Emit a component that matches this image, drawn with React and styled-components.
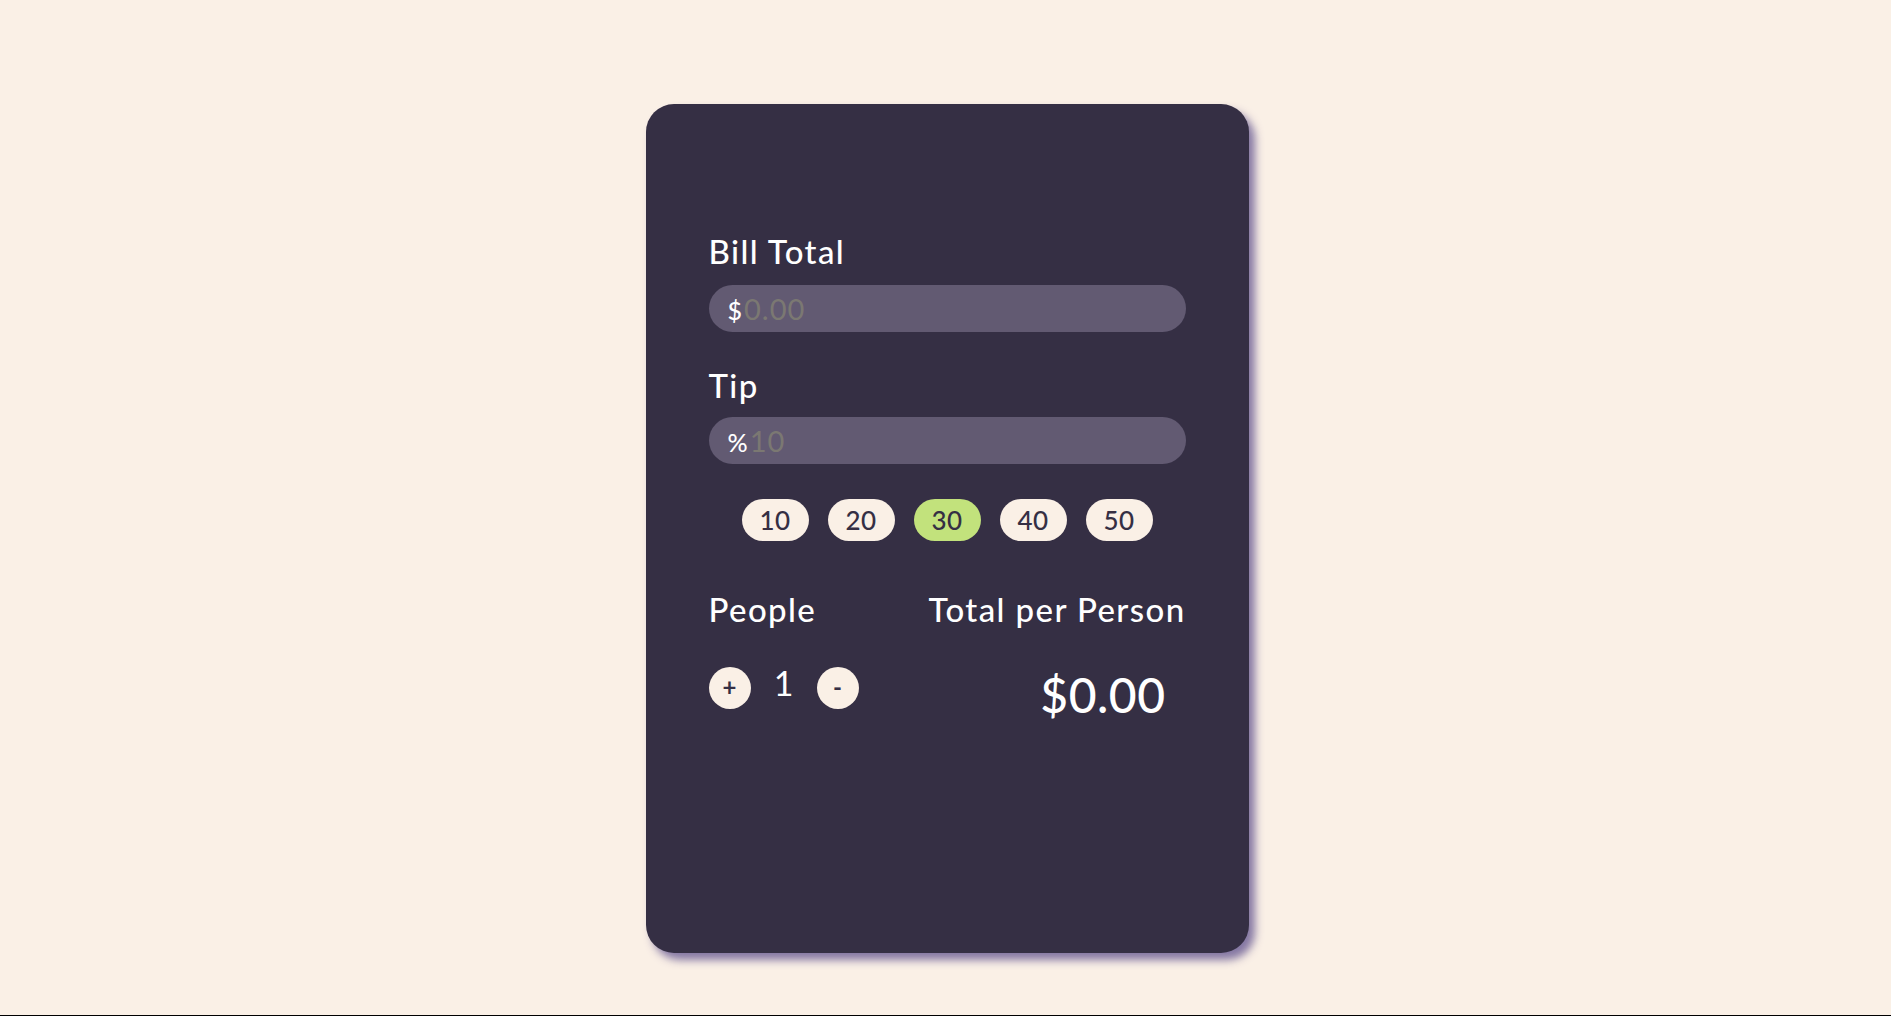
import React from "react";
import styled, { createGlobalStyle } from "styled-components";

const Global = createGlobalStyle`
  html { background: #000; }
  body {
    margin: 0;
    background: #faf0e6;
    min-height: calc(100vh - 1px);
    font-family: "Lato", "Noto Sans", sans-serif;
  }
  * { box-sizing: border-box; }
`;

const Page = styled.main`
  display: flex;
  justify-content: center;
  padding: 104px 0 0 3px;
`;

const Card = styled.section`
  width: 603px;
  height: 849px;
  background: #352f44;
  border-radius: 28px;
  box-shadow: 6px 7px 8px rgba(112, 98, 150, 0.85);
  padding: 128px 63px 0;
  display: flex;
  flex-direction: column;
`;

const Field = styled.div`
  display: flex;
  flex-direction: column;
  margin-bottom: ${(p) => p.$mb || 0}px;
`;

const Label = styled.div`
  color: #ffffff;
  font-size: 33px;
  line-height: 38px;
  font-weight: 500;
  letter-spacing: 1.4px;
  white-space: nowrap;
  margin-bottom: ${(p) => p.$mb || 0}px;
`;

const InputWrap = styled.label`
  display: flex;
  align-items: center;
  height: 47px;
  border-radius: 24px;
  background: #625a72;
  padding-left: 19px;
`;

const Prefix = styled.span`
  color: #ffffff;
  font-size: 25px;
  font-weight: 500;
  padding-top: 3px;
`;

const Input = styled.input`
  flex: 1;
  min-width: 0;
  border: none;
  outline: none;
  background: transparent;
  color: #ffffff;
  font-family: inherit;
  font-size: 29px;
  letter-spacing: 1px;
  margin-left: 2px;
  padding: 0;
  &::placeholder {
    color: #7b7872;
  }
`;

const TipRow = styled.div`
  display: flex;
  justify-content: center;
  gap: 19px;
  margin-top: 35px;
`;

const TipButton = styled.button`
  width: 67px;
  height: 42px;
  border: none;
  border-radius: 21px;
  background: ${(p) => (p.$active ? "#c2e27c" : "#faf0e6")};
  color: #352f44;
  font-family: inherit;
  font-size: 26px;
  font-weight: 500;
  letter-spacing: 0.5px;
  padding: 0;
  cursor: pointer;
`;

const Bottom = styled.div`
  display: flex;
  justify-content: space-between;
  margin-top: 49px;
`;

const Column = styled.div`
  display: flex;
  flex-direction: column;
  align-items: ${(p) => (p.$right ? "flex-end" : "flex-start")};
`;

const Counter = styled.div`
  display: flex;
  align-items: center;
  margin-top: 34px;
`;

const Round = styled.button`
  width: 42px;
  height: 42px;
  border: none;
  border-radius: 50%;
  background: #faf0e6;
  color: #352f44;
  font-family: inherit;
  font-size: 24px;
  font-weight: 700;
  padding: 0 0 2px;
  cursor: pointer;
`;

const Count = styled.span`
  width: 66px;
  text-align: center;
  color: #ffffff;
  font-size: 34px;
  padding-bottom: 10px;
`;

const Amount = styled.div`
  color: #ffffff;
  font-size: 48px;
  font-weight: 500;
  letter-spacing: 0.5px;
  margin-top: 38px;
  margin-right: 20px;
`;

export default function App() {
  return (
    <>
      <Global />
      <Page>
        <Card>
          <Field $mb={34}>
            <Label $mb={15}>Bill Total</Label>
            <InputWrap>
              <Prefix>$</Prefix>
              <Input placeholder="0.00" />
            </InputWrap>
          </Field>
          <Field>
            <Label $mb={13}>Tip</Label>
            <InputWrap>
              <Prefix>%</Prefix>
              <Input placeholder="10" />
            </InputWrap>
          </Field>
          <TipRow>
            {[10, 20, 30, 40, 50].map((v) => (
              <TipButton key={v} $active={v === 30}>
                {v}
              </TipButton>
            ))}
          </TipRow>
          <Bottom>
            <Column>
              <Label>People</Label>
              <Counter>
                <Round>+</Round>
                <Count>1</Count>
                <Round>-</Round>
              </Counter>
            </Column>
            <Column $right>
              <Label>Total per Person</Label>
              <Amount>$0.00</Amount>
            </Column>
          </Bottom>
        </Card>
      </Page>
    </>
  );
}
